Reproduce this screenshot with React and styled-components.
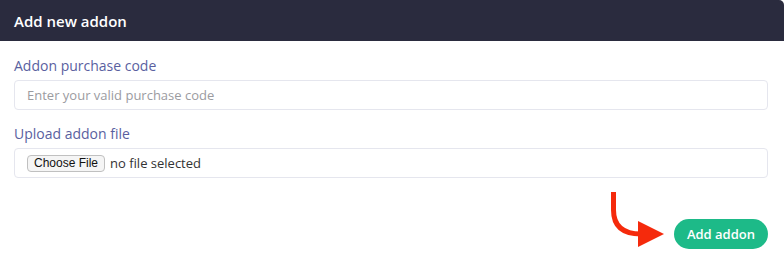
import React from "react";
import styled, { createGlobalStyle } from "styled-components";

const Global = createGlobalStyle`
  html, body { margin: 0; padding: 0; background: #ffffff; }
  body { font-family: "Open Sans", "DejaVu Sans", sans-serif; }
  * { box-sizing: border-box; }
`;

const Card = styled.div`
  width: 784px;
  background: #ffffff;
`;

const Header = styled.div`
  height: 41px;
  background: #2a2b3e;
  border-top-right-radius: 5px;
  display: flex;
  align-items: center;
  padding: 0 14px;
  color: #ffffff;
  font-size: 15px;
  font-weight: 600;
`;

const Body = styled.div`
  padding: 14px 16px 0 14px;
  display: flex;
  flex-direction: column;
`;

const Field = styled.div`
  display: flex;
  flex-direction: column;
  gap: 4px;
  margin-bottom: ${(p) => p.$mb || 0}px;
`;

const Label = styled.label`
  font-size: 14px;
  line-height: 21px;
  color: #5a5f9f;
  font-weight: 400;
`;

const Box = styled.div`
  height: 30px;
  border: 1px solid #e5e6ee;
  border-radius: 4px;
  display: flex;
  align-items: center;
  padding: 0 12px;
`;

const TextInput = styled.input`
  border: none;
  outline: none;
  width: 100%;
  font-family: inherit;
  font-size: 13px;
  color: #333;
  padding: 0;
  &::placeholder { color: #9b9b9f; }
`;

const FilePicker = styled.label`
  display: flex;
  align-items: center;
  gap: 5px;
  font-size: 13px;
  color: #333;
  cursor: pointer;
  input { display: none; }
`;

const ChooseButton = styled.span`
  display: inline-flex;
  align-items: center;
  height: 17px;
  padding: 0 6px;
  font-family: "Liberation Sans", Arial, sans-serif;
  font-size: 12px;
  color: #111;
  background: #f5f5f5;
  border: 1px solid #c0c0c0;
  border-radius: 4px;
`;

const Footer = styled.div`
  display: flex;
  justify-content: flex-end;
  align-items: flex-end;
  gap: 9px;
  margin-top: 14px;
`;

const Arrow = styled.svg`
  display: block;
  width: 56px;
  height: 57px;
`;

const Button = styled.button`
  height: 30px;
  padding: 0 13px;
  border: none;
  border-radius: 15px;
  background: #1dba88;
  color: #ffffff;
  font-family: inherit;
  font-size: 13px;
  font-weight: 600;
  cursor: pointer;
`;

export default function App() {
  return (
    <>
      <Global />
      <Card>
        <Header>Add new addon</Header>
        <Body>
          <Field $mb={13}>
            <Label>Addon purchase code</Label>
            <Box>
              <TextInput placeholder="Enter your valid purchase code" />
            </Box>
          </Field>
          <Field>
            <Label>Upload addon file</Label>
            <Box>
              <FilePicker>
                <input type="file" />
                <ChooseButton>Choose File</ChooseButton>
                <span>no file selected</span>
              </FilePicker>
            </Box>
          </Field>
          <Footer>
            <Arrow viewBox="0 0 56 57">
              <path
                d="M4.5 0 V18 C4.5 34 14 42 32 42"
                fill="none"
                stroke="#f52a0c"
                strokeWidth="5"
              />
              <polygon points="29,29 55,42 29,55" fill="#f52a0c" />
            </Arrow>
            <Button>Add addon</Button>
          </Footer>
        </Body>
      </Card>
    </>
  );
}
